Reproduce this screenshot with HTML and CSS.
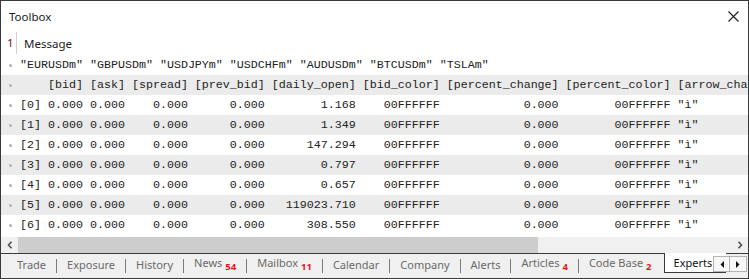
FILE: index.html
```html
<!DOCTYPE html>
<html>
<head>
<meta charset="utf-8">
<link rel="stylesheet" href="styles.css">
</head>
<body>
<div class="toolbox">
  <div class="titlebar">
    <span class="title">Toolbox</span>
    <svg class="close" width="11" height="11" viewBox="0 0 11 11"><path d="M0.5 0.5 L10.5 10.5 M10.5 0.5 L0.5 10.5" stroke="#1b1b1b" stroke-width="1.1" fill="none"/></svg>
  </div>
  <div class="colhead">
    <span class="num">1</span>
    <span class="msg">Message</span>
  </div>
  <div class="lines">
    <div class="line"><span class="dot"></span><span class="code">"EURUSDm" "GBPUSDm" "USDJPYm" "USDCHFm" "AUDUSDm" "BTCUSDm" "TSLAm"</span></div>
    <div class="line"><span class="dot"></span><span class="code">    [bid] [ask] [spread] [prev_bid] [daily_open] [bid_color] [percent_change] [percent_color] [arrow_char] [arrow_color]</span></div>
    <div class="line"><span class="dot"></span><span class="code">[0] 0.000 0.000    0.000      0.000        1.168    00FFFFFF            0.000        00FFFFFF "ì"</span></div>
    <div class="line"><span class="dot"></span><span class="code">[1] 0.000 0.000    0.000      0.000        1.349    00FFFFFF            0.000        00FFFFFF "ì"</span></div>
    <div class="line"><span class="dot"></span><span class="code">[2] 0.000 0.000    0.000      0.000      147.294    00FFFFFF            0.000        00FFFFFF "ì"</span></div>
    <div class="line"><span class="dot"></span><span class="code">[3] 0.000 0.000    0.000      0.000        0.797    00FFFFFF            0.000        00FFFFFF "ì"</span></div>
    <div class="line"><span class="dot"></span><span class="code">[4] 0.000 0.000    0.000      0.000        0.657    00FFFFFF            0.000        00FFFFFF "ì"</span></div>
    <div class="line"><span class="dot"></span><span class="code">[5] 0.000 0.000    0.000      0.000   119023.710    00FFFFFF            0.000        00FFFFFF "ì"</span></div>
    <div class="line"><span class="dot"></span><span class="code">[6] 0.000 0.000    0.000      0.000      308.550    00FFFFFF            0.000        00FFFFFF "ì"</span></div>
  </div>
  <div class="spacer"></div>
  <div class="hscroll">
    <span class="sbtn"><svg width="6" height="8" viewBox="0 0 6 8"><path d="M4.5 0.8 L1.5 4 L4.5 7.2" stroke="#505050" stroke-width="1.6" fill="none"/></svg></span>
    <span class="thumb"></span>
    <span class="track"></span>
    <span class="sbtn"><svg width="6" height="8" viewBox="0 0 6 8"><path d="M1.5 0.8 L4.5 4 L1.5 7.2" stroke="#505050" stroke-width="1.6" fill="none"/></svg></span>
  </div>
  <div class="tabbar">
    <div class="tabs">
      <span class="tab">Trade</span><span class="sep"></span>
      <span class="tab">Exposure</span><span class="sep"></span>
      <span class="tab">History</span><span class="sep"></span>
      <span class="tab">News<span class="count">54</span></span><span class="sep"></span>
      <span class="tab">Mailbox<span class="count">11</span></span><span class="sep"></span>
      <span class="tab">Calendar</span><span class="sep"></span>
      <span class="tab">Company</span><span class="sep"></span>
      <span class="tab">Alerts</span><span class="sep"></span>
      <span class="tab">Articles<span class="count">4</span></span><span class="sep"></span>
      <span class="tab">Code Base<span class="count">2</span></span>
      <span class="tab active">Experts</span>
    </div>
    <div class="tabnav">
      <span class="navbtn"><svg width="4" height="7" viewBox="0 0 4 7"><path d="M4 0 L0.5 3.5 L4 7 Z" fill="#111"/></svg></span>
      <span class="navbtn"><svg width="4" height="7" viewBox="0 0 4 7"><path d="M0 0 L3.5 3.5 L0 7 Z" fill="#111"/></svg></span>
    </div>
  </div>
</div>
</body>
</html>
```

FILE: styles.css
```css
* {
  box-sizing: border-box;
  margin: 0;
  padding: 0;
}

html, body {
  width: 749px;
  height: 279px;
  overflow: hidden;
  background: #ffffff;
}

body {
  font-family: "Noto Sans", "Open Sans", sans-serif;
  font-size: 11px;
  color: #1b1b1b;
}

.toolbox {
  width: 749px;
  height: 279px;
  border: 1px solid #3a3a3a;
  display: flex;
  flex-direction: column;
  background: #ffffff;
  overflow: hidden;
}

.titlebar {
  height: 30px;
  flex: none;
  display: flex;
  align-items: center;
  justify-content: space-between;
  padding: 0 9px 0 8px;
}

.title {
  font-size: 11.5px;
  color: #1b1b1b;
}

.close {
  display: block;
  margin-top: 1px;
}

.colhead {
  height: 24px;
  flex: none;
  display: flex;
  align-items: center;
}

.num {
  width: 16px;
  height: 22px;
  border-right: 1px solid #cfcfcf;
  padding-left: 6px;
  line-height: 21px;
  color: #7a1010;
  font-size: 11.5px;
}

.msg {
  padding-left: 7px;
  font-size: 11.5px;
  color: #1b1b1b;
}

.lines {
  height: 180px;
  flex: none;
  overflow: hidden;
}

.line {
  height: 20px;
  display: flex;
  align-items: center;
  white-space: nowrap;
}

.line:nth-child(even) {
  background: #ebebeb;
}

.dot {
  flex: none;
  width: 3px;
  height: 3px;
  border-radius: 50%;
  background: #b0b0b0;
  margin: 0 8px 0 8px;
}

.code {
  font-family: "Liberation Mono", "Courier New", monospace;
  font-size: 11.667px;
  white-space: pre;
  color: #222222;
  line-height: 20px;
}

.spacer {
  height: 2px;
  flex: none;
}

.hscroll {
  height: 16px;
  flex: none;
  display: flex;
  background: #f0f0f0;
}

.sbtn {
  width: 17px;
  flex: none;
  display: flex;
  align-items: center;
  justify-content: center;
}

.thumb {
  width: 520px;
  flex: none;
  margin-left: 0;
  background: #cdcdcd;
}

.track {
  flex: 1;
}

.tabbar {
  height: 25px;
  flex: none;
  border-top: 1px solid #3a3a3a;
  background: #f0f0f0;
  position: relative;
}

.tabs {
  display: flex;
  align-items: center;
  height: 100%;
  padding-left: 16px;
  white-space: nowrap;
}

.tab {
  color: #6a6a6a;
  font-size: 11px;
  line-height: 16px;
  margin-top: -2px;
}

.count {
  color: #e8141c;
  font-weight: bold;
  font-size: 9.5px;
  margin-left: 3px;
  vertical-align: -3px;
}

.sep {
  width: 1px;
  height: 14px;
  background: #7c7c7c;
  margin: 0 10px;
  margin-top: -1px;
}

.tab.active {
  align-self: flex-start;
  margin-top: -1px;
  margin-left: 12px;
  height: 20px;
  display: flex;
  align-items: center;
  padding: 0 14px 0 9px;
  background: #ffffff;
  border-left: 1px solid #3a3a3a;
  border-bottom: 1px solid #3a3a3a;
  color: #111111;
}

.tabnav {
  position: absolute;
  right: 1px;
  top: 2px;
  display: flex;
  background: #f0f0f0;
}

.navbtn {
  width: 17px;
  height: 16px;
  border: 1px solid #b4b4b4;
  background: #f7f7f7;
  display: flex;
  align-items: center;
  justify-content: center;
}

.navbtn + .navbtn {
  border-left: none;
}
```
